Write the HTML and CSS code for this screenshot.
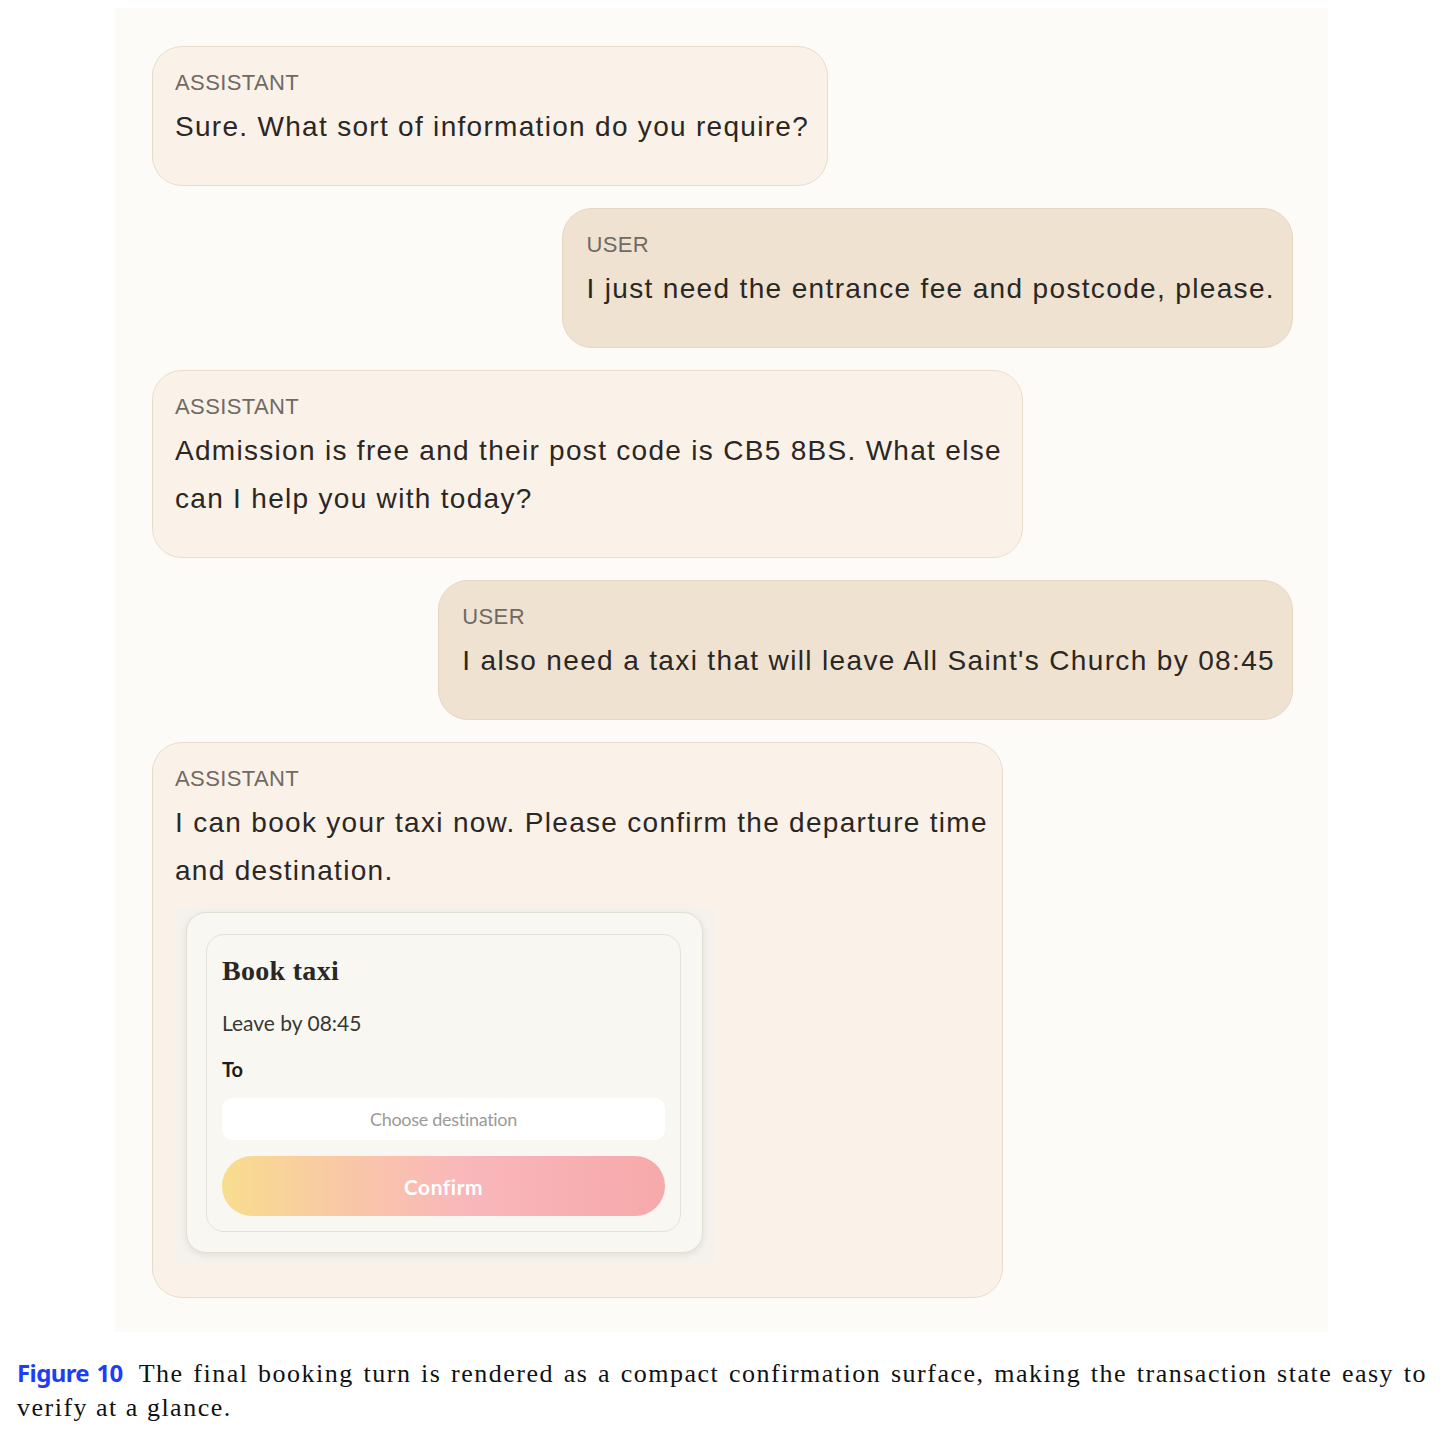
FILE: index.html
```html
<!DOCTYPE html>
<html lang="en">
<head>
    <meta charset="UTF-8">
    <meta name="viewport" content="width=device-width, initial-scale=1.0">
    <title>Booking turn</title>
    <link rel="stylesheet" href="styles.css">
</head>
<body>

<div class="panel">
    <!-- Conversation -->
    <div class="bubble assistant">
        <div class="role">ASSISTANT</div>
        <div class="text">Sure. What sort of information do you require?</div>
    </div>

    <div class="bubble user">
        <div class="role">USER</div>
        <div class="text">I just need the entrance fee and postcode, please.</div>
    </div>

    <div class="bubble assistant wide">
        <div class="role">ASSISTANT</div>
        <div class="text">Admission is free and their post code is CB5 8BS. What else can I help you with today?</div>
    </div>

    <div class="bubble user">
        <div class="role">USER</div>
        <div class="text">I also need a taxi that will leave All Saint's Church by 08:45</div>
    </div>

    <div class="bubble assistant mid">
        <div class="role">ASSISTANT</div>
        <div class="text">I can book your taxi now. Please confirm the departure time and destination.</div>

        <!-- Booking surface -->
        <div class="surface">
            <div class="card">
                <div class="card-inner">
                    <h3 class="card-title">Book taxi</h3>
                    <p class="card-line">Leave by 08:45</p>
                    <p class="card-label">To</p>
                    <div class="field">Choose destination</div>
                    <button class="confirm">Confirm</button>
                </div>
            </div>
        </div>
    </div>
</div>

<p class="caption"><span class="fig">Figure 10</span><span class="caption-text">The final booking turn is rendered as a compact confirmation surface, making the transaction state easy to verify at a glance.</span></p>

</body>
</html>
```

FILE: styles.css
```css
body {
    margin: 0;
    background-color: #fff;
    font-family: "Liberation Sans", Arial, sans-serif;
}

.panel {
    width: 1213px;
    height: 1324px;
    box-sizing: border-box;
    margin: 8px 0 0 115px;
    padding: 38px 35px 0 37px;
    background-color: #fdfbf7;
    display: flex;
    flex-direction: column;
    gap: 22px;
}

.bubble {
    width: fit-content;
    box-sizing: border-box;
    padding: 21px 18px 34px 22px;
    border-radius: 30px;
    border: 1px solid #e9dccb;
}

.bubble.assistant {
    align-self: flex-start;
    background-color: #faf2e8;
}

.bubble.user {
    align-self: flex-end;
    background-color: #efe2d1;
    border-color: #e6d7c3;
    padding-left: 23px;
    padding-right: 17px;
}

.bubble.wide {
    width: 871px;
}

.bubble.mid {
    width: 851px;
    padding-right: 8px;
}

.role {
    font-size: 22px;
    line-height: 30px;
    letter-spacing: 0.4px;
    color: #6f6a64;
    margin-bottom: 5px;
}

.text {
    font-size: 28px;
    line-height: 48px;
    letter-spacing: 1.3px;
    color: #2a2724;
}

.bubble.user .text {
    letter-spacing: 1.35px;
}

.surface {
    width: 538px;
    box-sizing: border-box;
    margin: 12px 0 0 1px;
    padding: 5px 11px 10px 10px;
    background-color: #f5f2ed;
}

.card {
    background-color: #f8f7f2;
    border: 1px solid #e3dfd5;
    border-radius: 20px;
    box-shadow: 0 2px 6px rgba(120, 110, 90, 0.15);
    padding: 21px 21px 20px 19px;
}

.card-inner {
    border: 1px solid #e6e2d9;
    border-radius: 18px;
    padding: 19px 15px 15px 15px;
    display: flex;
    flex-direction: column;
    font-family: Lato, "Liberation Sans", sans-serif;
}

.card-title {
    margin: 0;
    font-family: "Liberation Serif", serif;
    font-weight: 600;
    font-size: 28px;
    line-height: 34px;
    letter-spacing: 0.3px;
    color: #2a2724;
}

.card-line {
    margin: 23px 0 0 0;
    font-size: 21px;
    line-height: 24px;
    color: #3a3733;
}

.card-label {
    margin: 22px 0 0 0;
    font-size: 20px;
    line-height: 24px;
    font-weight: bold;
    color: #1e1c1a;
}

.field {
    margin-top: 17px;
    height: 42px;
    line-height: 42px;
    background-color: #fff;
    border-radius: 10px;
    text-align: center;
    font-size: 18px;
    color: #9c9a97;
    letter-spacing: -0.3px;
}

.confirm {
    margin-top: 16px;
    height: 60px;
    border: none;
    border-radius: 30px;
    background: linear-gradient(90deg, #f8dd8e 0%, #f9c6a8 30%, #f9b7bb 55%, #f6a9aa 100%);
    color: #fff;
    font-family: Lato, "Liberation Sans", sans-serif;
    font-weight: bold;
    font-size: 21px;
    letter-spacing: 0.5px;
}

.caption {
    margin: 24px 16px 0 17px;
    font-family: "Liberation Serif", serif;
    font-size: 26px;
    line-height: 34px;
    letter-spacing: 1.5px;
    text-align: justify;
    color: #111;
}

.fig {
    font-family: "Noto Sans", sans-serif;
    font-weight: 700;
    font-size: 24px;
    color: #1d3ef5;
    letter-spacing: -0.6px;
    margin-right: 16px;
}
```
